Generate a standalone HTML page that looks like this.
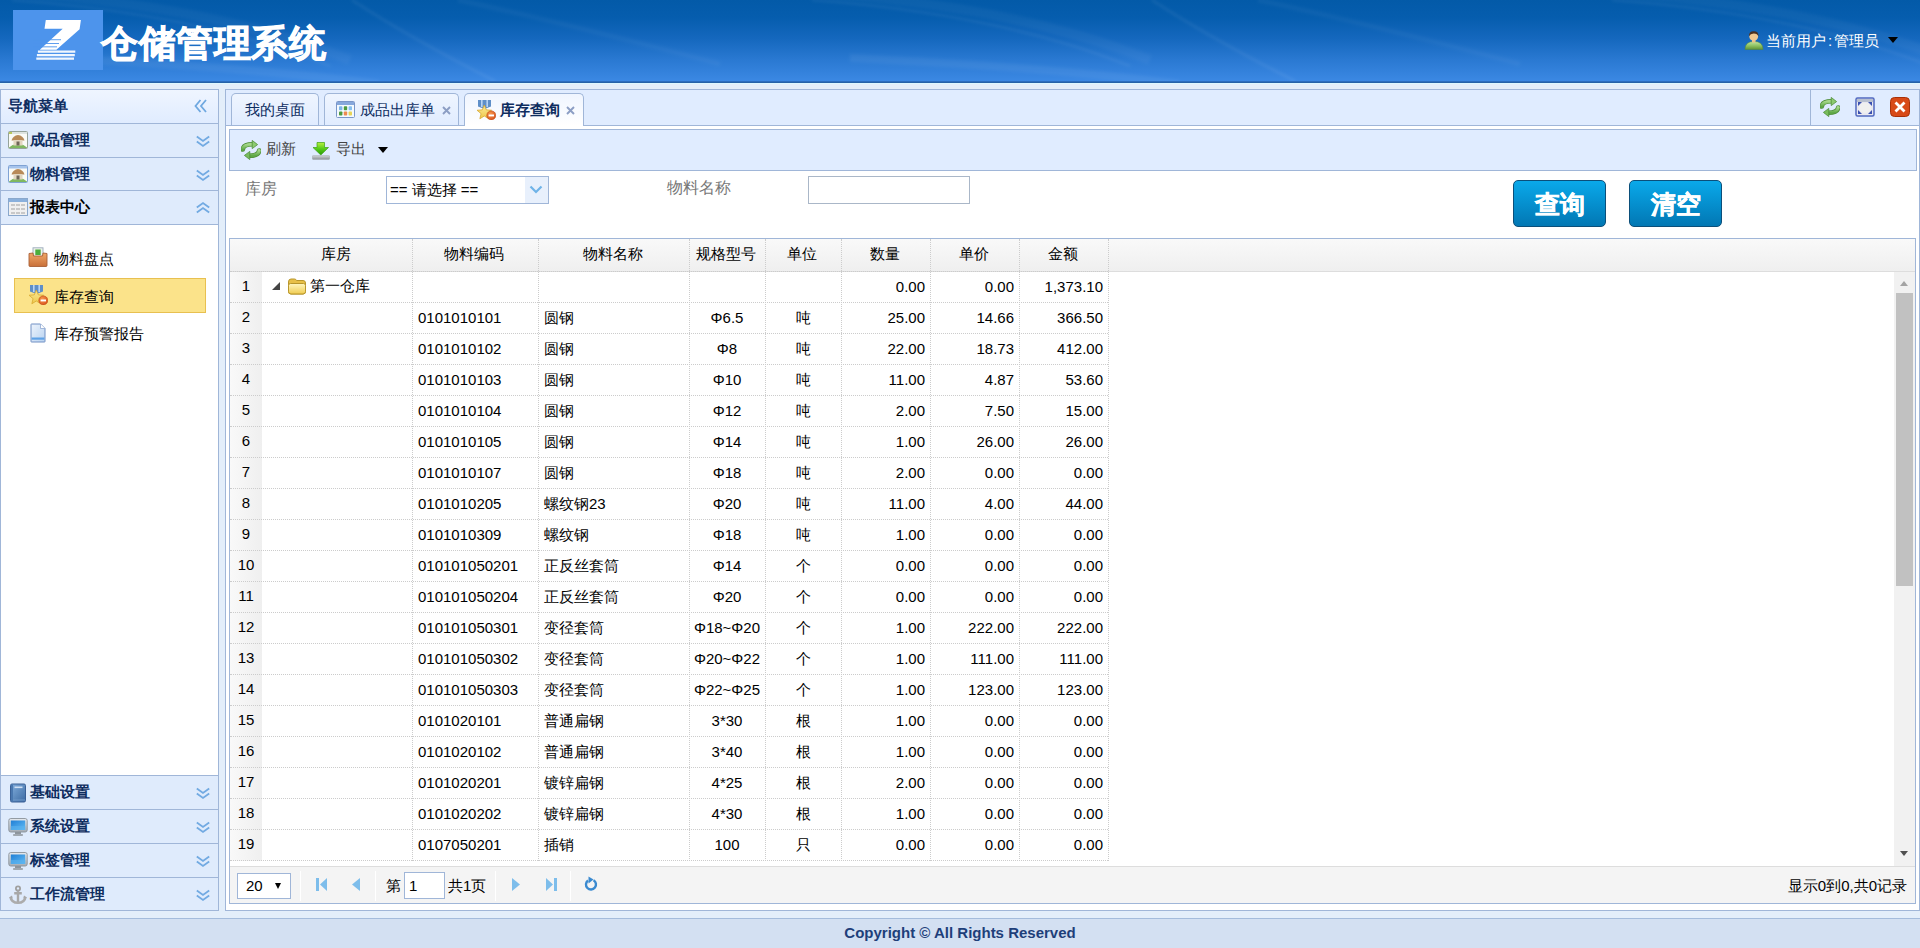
<!DOCTYPE html>
<html><head><meta charset="utf-8"><title>仓储管理系统</title>
<style>
*{box-sizing:border-box}
html,body{margin:0;padding:0}
body{width:1920px;height:948px;overflow:hidden;position:relative;background:#E3EEFA;font-family:"Liberation Sans",sans-serif;font-size:15px;color:#000}
.abs{position:absolute}
svg{display:block}
#hdr{left:0;top:0;width:1920px;height:81px;background:linear-gradient(to bottom,#035AA8 0,#065DAE 22%,#1568BE 48%,#2A79D2 74%,#3B88E3 100%)}
.swoosh{position:absolute;border-radius:50%}
.pnl{border:1px solid #A0B6D8}
.phd{background:linear-gradient(to bottom,#EFF5FF 0,#E0ECFF 100%);border-bottom:1px solid #A0B6D8}
.ptitle{font-weight:bold;color:#0E2D5F;white-space:nowrap}
.txt{white-space:nowrap;line-height:17px}
.dotv{position:absolute;width:0;border-left:1px dotted #ccc}
.doth{position:absolute;height:0;border-top:1px dotted #ccc}
</style></head><body>

<div id="hdr" class="abs"></div>
<svg class="abs" style="left:0;top:0" width="1920" height="81" viewBox="0 0 1920 81"><defs><filter id="bl" x="-5%" y="-50%" width="110%" height="200%"><feGaussianBlur stdDeviation="1.8"/></filter></defs><g filter="url(#bl)"><path d="M-448 0 Q-390 38 -305 81" fill="none" stroke="rgba(255,255,255,0.07)" stroke-width="2.5"/><path d="M-750 58 Q-540 68 -421 84" fill="none" stroke="rgba(255,255,255,0.05)" stroke-width="8"/><path d="M-342 0 Q-240 22 -80 64" fill="none" stroke="rgba(255,255,255,0.035)" stroke-width="5"/><path d="M12 0 Q200 14 330 66" fill="none" stroke="rgba(255,255,255,0.07)" stroke-width="2"/><path d="M30 -6 Q220 8 350 60" fill="none" stroke="rgba(255,255,255,0.035)" stroke-width="10"/><path d="M352 0 Q410 38 495 81" fill="none" stroke="rgba(255,255,255,0.07)" stroke-width="2.5"/><path d="M50 58 Q260 68 379 84" fill="none" stroke="rgba(255,255,255,0.05)" stroke-width="8"/><path d="M458 0 Q560 22 720 64" fill="none" stroke="rgba(255,255,255,0.035)" stroke-width="5"/><path d="M812 0 Q1000 14 1130 66" fill="none" stroke="rgba(255,255,255,0.07)" stroke-width="2"/><path d="M830 -6 Q1020 8 1150 60" fill="none" stroke="rgba(255,255,255,0.035)" stroke-width="10"/><path d="M1152 0 Q1210 38 1295 81" fill="none" stroke="rgba(255,255,255,0.07)" stroke-width="2.5"/><path d="M850 58 Q1060 68 1179 84" fill="none" stroke="rgba(255,255,255,0.05)" stroke-width="8"/><path d="M1258 0 Q1360 22 1520 64" fill="none" stroke="rgba(255,255,255,0.035)" stroke-width="5"/><path d="M1612 0 Q1800 14 1930 66" fill="none" stroke="rgba(255,255,255,0.07)" stroke-width="2"/><path d="M1630 -6 Q1820 8 1950 60" fill="none" stroke="rgba(255,255,255,0.035)" stroke-width="10"/></g></svg>
<div class="abs" style="left:0;top:81px;width:1920px;height:1px;background:#2C6EBE"></div>
<div class="abs" style="left:0;top:82px;width:1920px;height:1px;background:#2662A8"></div>
<div class="abs" style="left:0;top:83px;width:1920px;height:1px;background:#DDF8FF"></div>
<div class="abs" style="left:13px;top:10px;width:90px;height:60px;background:#4D94EC"></div>
<svg class="abs" style="left:13px;top:10px" width="90" height="60" viewBox="0 0 90 60">
<path d="M32.8 10 L67.9 10 L66.6 19.2 L43.4 39.8 L26.8 39.8 L49.7 18.7 L31.5 18.7 Z" fill="#fff"/>
<g fill="#4D94EC"><rect x="20" y="29.3" width="28" height="0.9"/><rect x="20" y="33" width="26" height="0.9"/><rect x="20" y="36.4" width="24" height="0.9"/></g>
<path d="M24.9 40.6 L62.3 40.6 L62.3 42.7 L24.9 42.7 Z M23.9 44.1 L61.8 44.1 L61.8 46.2 L23.9 46.2 Z M23.3 47.6 L61 47.6 L61 49.8 L23.3 49.8 Z" fill="#fff" opacity="0.92"/>
</svg>
<div class="abs txt" style="left:101px;top:21px;letter-spacing:0.6px;font-size:37.4px;line-height:44px;font-weight:bold;color:#fff;-webkit-text-stroke:0.9px #fff">仓储管理系统</div>
<div class="abs" style="left:1744px;top:30px"><svg width="20" height="20" viewBox="0 0 20 20"><defs><linearGradient id="ug" x1="0" y1="0" x2="0" y2="1"><stop offset="0" stop-color="#C4E8A0"/><stop offset="0.55" stop-color="#8CC060"/><stop offset="1" stop-color="#5E9236"/></linearGradient></defs><path d="M1 19.5 Q1 11.5 10 11.5 Q19 11.5 19 19.5 Z" fill="url(#ug)" stroke="#5A8A34" stroke-width="0.5"/><rect x="8" y="9.5" width="3.5" height="3" fill="#E8C088"/><circle cx="9.7" cy="6.4" r="4.4" fill="#F0C890"/><path d="M5 6.2 Q4.8 1.2 9.8 1.2 Q14.8 1.2 14.5 6.4 Q13.5 3.8 9.8 3.6 Q6.2 3.8 5 6.2 Z" fill="#4A3020"/></svg></div>
<div class="abs txt" style="left:1766px;top:32px;color:#fff">当前用户<span style="padding:0 2px 0 2px">:</span>管理员</div>
<div class="abs" style="left:1888px;top:37px;width:0;height:0;border-left:5px solid transparent;border-right:5px solid transparent;border-top:6px solid #000"></div>
<div class="abs pnl" style="left:0;top:89px;width:219px;height:822px;background:#fff"></div>
<div class="abs phd" style="left:1px;top:90px;width:217px;height:34px"></div>
<div class="abs txt ptitle" style="left:8px;top:97px">导航菜单</div>
<div class="abs" style="left:194px;top:99px"><svg width="14" height="14" viewBox="0 0 14 14"><path d="M6.5 1 L1.5 7 L6.5 13" fill="none" stroke="#6fa8e0" stroke-width="1.8"/><path d="M12 1 L7 7 L12 13" fill="none" stroke="#6fa8e0" stroke-width="1.8"/></svg></div>
<div class="abs phd" style="left:1px;top:124px;width:217px;height:34px;background:#DFEBFC;"></div><div class="abs" style="left:8px;top:131px"><svg width="20" height="18" viewBox="0 0 20 18"><rect x="0.5" y="0.5" width="19" height="17" rx="1" fill="#FAFBF6" stroke="#95A39A"/><rect x="1" y="1" width="18" height="2" fill="#DDE3E0"/><rect x="1" y="1" width="3" height="2" fill="#B8C860"/><path d="M1 16.5 Q6 12 10 13.5 Q14 12 19 16.5 L19 17 L1 17 Z" fill="#7FB860"/><path d="M3.5 9.5 Q5 4.5 10 4 Q15 4.5 16.5 9.5 Z" fill="#B88A58"/><rect x="5.5" y="9" width="9" height="5.5" fill="#E2D6C0"/><rect x="8.5" y="10.5" width="3" height="4" fill="#6F6658"/></svg></div><div class="abs txt ptitle" style="left:30px;top:131px;color:#0E2D5F">成品管理</div><div class="abs" style="left:196px;top:134px"><svg width="14" height="14" viewBox="0 0 14 14"><path d="M0.8 2.5 L7 7 L13.2 2.5" fill="none" stroke="#72AAE2" stroke-width="1.8"/><path d="M0.8 7.5 L7 12 L13.2 7.5" fill="none" stroke="#72AAE2" stroke-width="1.8"/></svg></div>
<div class="abs phd" style="left:1px;top:158px;width:217px;height:33px;background:#DFEBFC;"></div><div class="abs" style="left:8px;top:165px"><svg width="20" height="18" viewBox="0 0 20 18"><rect x="0.5" y="0.5" width="19" height="17" rx="1" fill="#FAFBF6" stroke="#7FA2D4"/><rect x="1" y="1" width="18" height="2.5" fill="#A6C4EC"/><path d="M1 16.5 Q6 12 10 13.5 Q14 12 19 16.5 L19 17 L1 17 Z" fill="#7FB860"/><path d="M3.5 9.5 Q5 4.5 10 4 Q15 4.5 16.5 9.5 Z" fill="#B88A58"/><rect x="5.5" y="9" width="9" height="5.5" fill="#E2D6C0"/><rect x="8.5" y="10.5" width="3" height="4" fill="#6F6658"/></svg></div><div class="abs txt ptitle" style="left:30px;top:165px;color:#0E2D5F">物料管理</div><div class="abs" style="left:196px;top:168px"><svg width="14" height="14" viewBox="0 0 14 14"><path d="M0.8 2.5 L7 7 L13.2 2.5" fill="none" stroke="#72AAE2" stroke-width="1.8"/><path d="M0.8 7.5 L7 12 L13.2 7.5" fill="none" stroke="#72AAE2" stroke-width="1.8"/></svg></div>
<div class="abs phd" style="left:1px;top:191px;width:217px;height:34px;background:#DFEBFC;"></div><div class="abs" style="left:8px;top:198px"><svg width="20" height="18" viewBox="0 0 20 18"><rect x="0.5" y="0.5" width="19" height="17" fill="#f0f0f0" stroke="#8aa8cc"/><rect x="1" y="1" width="18" height="3" fill="#8ab0dc"/><g fill="#c8c8c8"><rect x="3" y="6" width="4" height="2"/><rect x="8" y="6" width="4" height="2"/><rect x="13" y="6" width="4" height="2"/><rect x="3" y="10" width="4" height="2"/><rect x="8" y="10" width="4" height="2"/><rect x="13" y="10" width="4" height="2"/><rect x="3" y="14" width="4" height="2"/><rect x="8" y="14" width="4" height="2"/><rect x="13" y="14" width="4" height="2"/></g></svg></div><div class="abs txt ptitle" style="left:30px;top:198px;color:#000">报表中心</div><div class="abs" style="left:196px;top:201px"><svg width="14" height="14" viewBox="0 0 14 14"><path d="M0.8 6.5 L7 2 L13.2 6.5" fill="none" stroke="#72AAE2" stroke-width="1.8"/><path d="M0.8 11.5 L7 7 L13.2 11.5" fill="none" stroke="#72AAE2" stroke-width="1.8"/></svg></div>
<div class="abs" style="left:14px;top:278px;width:192px;height:35px;background:#FBE38A;border:1px solid #E8C050"></div>
<div class="abs" style="left:28px;top:247px"><svg width="20" height="20" viewBox="0 0 20 20"><defs><linearGradient id="bxg" x1="0" y1="0" x2="0" y2="1"><stop offset="0" stop-color="#F2A868"/><stop offset="1" stop-color="#C8703A"/></linearGradient></defs><rect x="5" y="0.8" width="10" height="9" fill="#EEF2EA" stroke="#9AAABA" stroke-width="0.9"/><rect x="7.3" y="2.5" width="5.4" height="5.5" fill="#4CAE3C"/><path d="M1 6.5 L5 6 L5.5 9 L14.5 9 L15 6 L19 6.5 L19 18.5 Q19 19.5 18 19.5 L2 19.5 Q1 19.5 1 18.5 Z" fill="url(#bxg)" stroke="#A86038" stroke-width="0.9"/></svg></div>
<div class="abs txt" style="left:54px;top:250px">物料盘点</div>
<div class="abs" style="left:28px;top:285px"><svg width="20" height="20" viewBox="0 0 20 20"><defs><linearGradient id="mg" x1="0" y1="0" x2="0" y2="1"><stop offset="0" stop-color="#FBEA9A"/><stop offset="1" stop-color="#EFC84A"/></linearGradient><radialGradient id="bg2" cx="0.4" cy="0.35" r="0.7"><stop offset="0" stop-color="#F89A50"/><stop offset="1" stop-color="#D8501A"/></radialGradient></defs><path d="M2 0 L15 0 L15 6.5 L8.5 9 L2 6.5 Z" fill="#5F8FC8"/><rect x="5" y="0" width="1.6" height="7" fill="#B8D4F4"/><rect x="10.4" y="0" width="1.6" height="7" fill="#B8D4F4"/><path d="M8.30 5.00 L10.30 9.85 L15.53 10.25 L11.53 13.65 L12.77 18.75 L8.30 16.00 L3.83 18.75 L5.07 13.65 L1.07 10.25 L6.30 9.85 Z" fill="url(#mg)" stroke="#D8A830" stroke-width="0.8" stroke-linejoin="round"/><circle cx="15.3" cy="15.4" r="4.5" fill="url(#bg2)" stroke="#C04810" stroke-width="0.6"/><rect x="12.6" y="14.5" width="5.4" height="1.9" fill="#fff"/></svg></div>
<div class="abs txt" style="left:54px;top:288px">库存查询</div>
<div class="abs" style="left:28px;top:323px"><svg width="20" height="20" viewBox="0 0 20 20"><defs><linearGradient id="pgg" x1="0" y1="0" x2="1" y2="1"><stop offset="0" stop-color="#EEF4FC"/><stop offset="1" stop-color="#B8D2F0"/></linearGradient></defs><path d="M3 1.5 Q3 1 3.5 1 L12.5 1 L17 5.5 L17 18.5 Q17 19 16.5 19 L3.5 19 Q3 19 3 18.5 Z" fill="url(#pgg)" stroke="#7090C4" stroke-width="1"/><path d="M12.5 1 L12.5 5.5 L17 5.5" fill="#FFFFFF" stroke="#90A8D0" stroke-width="0.8"/><rect x="3.6" y="14.5" width="12.8" height="2.2" fill="#5FA2E6"/></svg></div>
<div class="abs txt" style="left:54px;top:325px">库存预警报告</div>
<div class="abs" style="left:1px;top:775px;width:217px;height:1px;background:#A0B6D8"></div>
<div class="abs phd" style="left:1px;top:776px;width:217px;height:34px;background:#DFEBFC;"></div><div class="abs" style="left:8px;top:783px"><svg width="20" height="20" viewBox="0 0 20 20"><defs><linearGradient id="bkg" x1="0" y1="0" x2="1" y2="1"><stop offset="0" stop-color="#82AEDD"/><stop offset="1" stop-color="#3C6AA2"/></linearGradient></defs><rect x="2.5" y="1" width="15" height="18" rx="1.5" fill="url(#bkg)" stroke="#3A6096"/><rect x="3" y="1.5" width="2" height="17" fill="#4A78B0"/><rect x="6.5" y="3.5" width="8" height="1.6" fill="#CFE0F4"/><rect x="5" y="16.5" width="12" height="1" fill="#6E98C8"/></svg></div><div class="abs txt ptitle" style="left:30px;top:783px;color:#0E2D5F">基础设置</div><div class="abs" style="left:196px;top:786px"><svg width="14" height="14" viewBox="0 0 14 14"><path d="M0.8 2.5 L7 7 L13.2 2.5" fill="none" stroke="#72AAE2" stroke-width="1.8"/><path d="M0.8 7.5 L7 12 L13.2 7.5" fill="none" stroke="#72AAE2" stroke-width="1.8"/></svg></div>
<div class="abs phd" style="left:1px;top:810px;width:217px;height:34px;background:#DFEBFC;"></div><div class="abs" style="left:8px;top:817px"><svg width="20" height="20" viewBox="0 0 20 20"><defs><linearGradient id="mfg" x1="0" y1="0" x2="0" y2="1"><stop offset="0" stop-color="#E6EAEE"/><stop offset="1" stop-color="#A4ACB4"/></linearGradient><linearGradient id="msg" x1="0" y1="0" x2="1" y2="1"><stop offset="0" stop-color="#1F7FD6"/><stop offset="1" stop-color="#64BCF4"/></linearGradient></defs><rect x="7" y="14" width="6" height="4.5" fill="#8E969E"/><rect x="5" y="17" width="10" height="2" rx="0.8" fill="#A0A8B0"/><rect x="0.8" y="1.5" width="18.4" height="13.5" rx="2" fill="url(#mfg)" stroke="#8A929A" stroke-width="0.9"/><rect x="2.8" y="3.5" width="14.4" height="9.5" fill="url(#msg)"/><rect x="2.8" y="9" width="14.4" height="4" fill="#5AB2EE" opacity="0.6"/></svg></div><div class="abs txt ptitle" style="left:30px;top:817px;color:#0E2D5F">系统设置</div><div class="abs" style="left:196px;top:820px"><svg width="14" height="14" viewBox="0 0 14 14"><path d="M0.8 2.5 L7 7 L13.2 2.5" fill="none" stroke="#72AAE2" stroke-width="1.8"/><path d="M0.8 7.5 L7 12 L13.2 7.5" fill="none" stroke="#72AAE2" stroke-width="1.8"/></svg></div>
<div class="abs phd" style="left:1px;top:844px;width:217px;height:34px;background:#DFEBFC;"></div><div class="abs" style="left:8px;top:851px"><svg width="20" height="20" viewBox="0 0 20 20"><defs><linearGradient id="mfg" x1="0" y1="0" x2="0" y2="1"><stop offset="0" stop-color="#E6EAEE"/><stop offset="1" stop-color="#A4ACB4"/></linearGradient><linearGradient id="msg" x1="0" y1="0" x2="1" y2="1"><stop offset="0" stop-color="#1F7FD6"/><stop offset="1" stop-color="#64BCF4"/></linearGradient></defs><rect x="7" y="14" width="6" height="4.5" fill="#8E969E"/><rect x="5" y="17" width="10" height="2" rx="0.8" fill="#A0A8B0"/><rect x="0.8" y="1.5" width="18.4" height="13.5" rx="2" fill="url(#mfg)" stroke="#8A929A" stroke-width="0.9"/><rect x="2.8" y="3.5" width="14.4" height="9.5" fill="url(#msg)"/><rect x="2.8" y="9" width="14.4" height="4" fill="#5AB2EE" opacity="0.6"/></svg></div><div class="abs txt ptitle" style="left:30px;top:851px;color:#0E2D5F">标签管理</div><div class="abs" style="left:196px;top:854px"><svg width="14" height="14" viewBox="0 0 14 14"><path d="M0.8 2.5 L7 7 L13.2 2.5" fill="none" stroke="#72AAE2" stroke-width="1.8"/><path d="M0.8 7.5 L7 12 L13.2 7.5" fill="none" stroke="#72AAE2" stroke-width="1.8"/></svg></div>
<div class="abs phd" style="left:1px;top:878px;width:217px;height:32px;background:#DFEBFC;border-bottom:none"></div><div class="abs" style="left:8px;top:885px"><svg width="20" height="20" viewBox="0 0 20 20"><circle cx="10" cy="3.4" r="2.1" fill="none" stroke="#A0A0A0" stroke-width="1.8"/><path d="M10 5.5 V17.5 M6.2 8.2 H13.8" fill="none" stroke="#A8A8A8" stroke-width="2.4"/><path d="M2.5 12 Q3.5 17.8 10 17.8 Q16.5 17.8 17.5 12" fill="none" stroke="#ACACAC" stroke-width="2.6"/><path d="M1 12.5 L4 10.5 L4.8 13.5 Z M19 12.5 L16 10.5 L15.2 13.5 Z" fill="#A8A8A8"/></svg></div><div class="abs txt ptitle" style="left:30px;top:885px;color:#0E2D5F">工作流管理</div><div class="abs" style="left:196px;top:888px"><svg width="14" height="14" viewBox="0 0 14 14"><path d="M0.8 2.5 L7 7 L13.2 2.5" fill="none" stroke="#72AAE2" stroke-width="1.8"/><path d="M0.8 7.5 L7 12 L13.2 7.5" fill="none" stroke="#72AAE2" stroke-width="1.8"/></svg></div>
<div class="abs pnl" style="left:225px;top:89px;width:1695px;height:822px;background:#fff"></div>
<div class="abs" style="left:226px;top:90px;width:1693px;height:36px;background:#E0ECFF;border-bottom:1px solid #A0B6D8"></div>
<div class="abs" style="left:231px;top:93px;width:88px;height:32px;background:linear-gradient(to bottom,#EFF5FF 0,#E0ECFF 100%);border:1px solid #A0B6D8;border-bottom:none;border-radius:5px 5px 0 0"><div class="abs txt" style="left:13px;top:7px;color:#0E2D5F">我的桌面</div></div>
<div class="abs" style="left:324px;top:93px;width:135px;height:32px;background:linear-gradient(to bottom,#EFF5FF 0,#E0ECFF 100%);border:1px solid #A0B6D8;border-bottom:none;border-radius:5px 5px 0 0"><div class="abs" style="left:11px;top:7px"><svg width="19" height="17" viewBox="0 0 19 17"><rect x="0.5" y="0.5" width="18" height="16" rx="1" fill="#F4FAFE" stroke="#7A96C8"/><rect x="1" y="1" width="17" height="3" fill="#86A8DC"/><rect x="3" y="5.3" width="3.4" height="4" rx="0.8" fill="#7EB6E8"/><rect x="7.8" y="5.3" width="3.4" height="4" rx="0.8" fill="#4C9A40"/><rect x="12.6" y="5.3" width="3.4" height="4" rx="0.8" fill="#86C0F0"/><rect x="3" y="10.5" width="3.4" height="4" rx="0.8" fill="#4C9A40"/><rect x="7.8" y="10.5" width="3.4" height="4" rx="0.8" fill="#EE8A50"/><rect x="12.6" y="10.5" width="3.4" height="4" rx="0.8" fill="#E8D458"/></svg></div><div class="abs txt" style="left:35px;top:7px;color:#0E2D5F">成品出库单</div><svg class="abs" style="left:117px;top:12px" width="9" height="9" viewBox="0 0 9 9"><path d="M1 1 L8 8 M8 1 L1 8" stroke="#8C9EC4" stroke-width="1.9"/></svg></div>
<div class="abs" style="left:464px;top:93px;width:120px;height:33px;background:linear-gradient(to bottom,#EFF5FF 0,#ffffff 100%);border:1px solid #A0B6D8;border-bottom:none;border-radius:5px 5px 0 0"><div class="abs" style="left:11px;top:6px"><svg width="20" height="20" viewBox="0 0 20 20"><defs><linearGradient id="mg" x1="0" y1="0" x2="0" y2="1"><stop offset="0" stop-color="#FBEA9A"/><stop offset="1" stop-color="#EFC84A"/></linearGradient><radialGradient id="bg2" cx="0.4" cy="0.35" r="0.7"><stop offset="0" stop-color="#F89A50"/><stop offset="1" stop-color="#D8501A"/></radialGradient></defs><path d="M2 0 L15 0 L15 6.5 L8.5 9 L2 6.5 Z" fill="#5F8FC8"/><rect x="5" y="0" width="1.6" height="7" fill="#B8D4F4"/><rect x="10.4" y="0" width="1.6" height="7" fill="#B8D4F4"/><path d="M8.30 5.00 L10.30 9.85 L15.53 10.25 L11.53 13.65 L12.77 18.75 L8.30 16.00 L3.83 18.75 L5.07 13.65 L1.07 10.25 L6.30 9.85 Z" fill="url(#mg)" stroke="#D8A830" stroke-width="0.8" stroke-linejoin="round"/><circle cx="15.3" cy="15.4" r="4.5" fill="url(#bg2)" stroke="#C04810" stroke-width="0.6"/><rect x="12.6" y="14.5" width="5.4" height="1.9" fill="#fff"/></svg></div><div class="abs txt" style="left:35px;top:7px;color:#0E2D5F;font-weight:bold">库存查询</div><svg class="abs" style="left:101px;top:12px" width="9" height="9" viewBox="0 0 9 9"><path d="M1 1 L8 8 M8 1 L1 8" stroke="#8C9EC4" stroke-width="1.9"/></svg></div>
<div class="abs" style="left:1810px;top:90px;width:1px;height:35px;background:#A0B6D8"></div>
<div class="abs" style="left:1820px;top:97px"><svg width="20" height="20" viewBox="0 0 20 20"><defs><linearGradient id="rg" x1="0" y1="0" x2="0" y2="1"><stop offset="0" stop-color="#A6D88A"/><stop offset="1" stop-color="#5EA846"/></linearGradient></defs><path d="M1.8 9.5 Q2.2 4.3 11.5 4.3" fill="none" stroke="#4F8F3A" stroke-width="4.6" stroke-linecap="round"/><path d="M1.8 9.5 Q2.2 4.3 11.5 4.3" fill="none" stroke="url(#rg)" stroke-width="3.2" stroke-linecap="round"/><path d="M11.2 0.4 L16.6 4.6 L11.2 8.6 Z" fill="#8CCB70" stroke="#4F8F3A" stroke-width="0.8" stroke-linejoin="round"/><path d="M18.2 10.5 Q17.8 15.7 8.5 15.7" fill="none" stroke="#4F8F3A" stroke-width="4.6" stroke-linecap="round"/><path d="M18.2 10.5 Q17.8 15.7 8.5 15.7" fill="none" stroke="url(#rg)" stroke-width="3.2" stroke-linecap="round"/><path d="M8.8 11.4 L3.4 15.4 L8.8 19.6 Z" fill="#78BC5C" stroke="#4F8F3A" stroke-width="0.8" stroke-linejoin="round"/></svg></div>
<div class="abs" style="left:1855px;top:97px"><svg width="20" height="20" viewBox="0 0 20 20"><rect x="1" y="1" width="18" height="18" rx="1.5" fill="#e8e8f0" stroke="#5068c0" stroke-width="1.5"/><rect x="2" y="2" width="16" height="3" fill="#b8c0d0"/><ellipse cx="10" cy="11" rx="6" ry="5" fill="#f0f0f0"/><path d="M3 5 L7 5 L3 9 Z M17 5 L13 5 L17 9 Z M3 17 L7 17 L3 13 Z M17 17 L13 17 L17 13 Z" fill="#3a50b0"/></svg></div>
<div class="abs" style="left:1890px;top:97px"><svg width="20" height="20" viewBox="0 0 20 20"><rect x="0.5" y="0.5" width="19" height="19" rx="4" fill="#d84a18" stroke="#a83008"/><path d="M5.5 5.5 L14.5 14.5 M14.5 5.5 L5.5 14.5" stroke="#fff" stroke-width="2.8"/></svg></div>
<div class="abs" style="left:229px;top:129px;width:1688px;height:42px;background:#E0ECFF;border:1px solid #A0B6D8"></div>
<div class="abs" style="left:241px;top:140px"><svg width="20" height="20" viewBox="0 0 20 20"><defs><linearGradient id="rg" x1="0" y1="0" x2="0" y2="1"><stop offset="0" stop-color="#A6D88A"/><stop offset="1" stop-color="#5EA846"/></linearGradient></defs><path d="M1.8 9.5 Q2.2 4.3 11.5 4.3" fill="none" stroke="#4F8F3A" stroke-width="4.6" stroke-linecap="round"/><path d="M1.8 9.5 Q2.2 4.3 11.5 4.3" fill="none" stroke="url(#rg)" stroke-width="3.2" stroke-linecap="round"/><path d="M11.2 0.4 L16.6 4.6 L11.2 8.6 Z" fill="#8CCB70" stroke="#4F8F3A" stroke-width="0.8" stroke-linejoin="round"/><path d="M18.2 10.5 Q17.8 15.7 8.5 15.7" fill="none" stroke="#4F8F3A" stroke-width="4.6" stroke-linecap="round"/><path d="M18.2 10.5 Q17.8 15.7 8.5 15.7" fill="none" stroke="url(#rg)" stroke-width="3.2" stroke-linecap="round"/><path d="M8.8 11.4 L3.4 15.4 L8.8 19.6 Z" fill="#78BC5C" stroke="#4F8F3A" stroke-width="0.8" stroke-linejoin="round"/></svg></div>
<div class="abs txt" style="left:266px;top:140px;color:#444">刷新</div>
<div class="abs" style="left:312px;top:142px"><svg width="18" height="18" viewBox="0 0 18 18"><defs><linearGradient id="dg" x1="0" y1="0" x2="0" y2="1"><stop offset="0" stop-color="#B8F040"/><stop offset="0.5" stop-color="#58CC18"/><stop offset="1" stop-color="#2A9A08"/></linearGradient><linearGradient id="tg" x1="0" y1="0" x2="0" y2="1"><stop offset="0" stop-color="#D0D4D8"/><stop offset="1" stop-color="#8C9298"/></linearGradient></defs><path d="M5 0.5 L12.5 0.5 L12.5 5.5 L16.5 5.5 L8.8 13 L1 5.5 L5 5.5 Z" fill="url(#dg)" stroke="#3AA012" stroke-width="0.7" stroke-linejoin="round"/><rect x="0.3" y="13.5" width="17.4" height="4" rx="1" fill="url(#tg)" stroke="#9AA0A6" stroke-width="0.4"/></svg></div>
<div class="abs txt" style="left:336px;top:140px;color:#444">导出</div>
<div class="abs" style="left:378px;top:147px;width:0;height:0;border-left:5.5px solid transparent;border-right:5.5px solid transparent;border-top:6px solid #000"></div>
<div class="abs txt" style="left:245px;top:180px;color:#777;font-size:16px">库房</div>
<div class="abs" style="left:386px;top:176px;width:163px;height:28px;border:1px solid #A0B6D8;background:#fff"></div>
<div class="abs" style="left:525px;top:177px;width:23px;height:26px;background:#E8F0FC"></div>
<svg class="abs" style="left:529px;top:185px" width="14" height="9" viewBox="0 0 14 9"><path d="M1.5 1.5 L7 7 L12.5 1.5" fill="none" stroke="#6FB3E8" stroke-width="2.2"/></svg>
<div class="abs txt" style="left:390px;top:181px">== 请选择 ==</div>
<div class="abs txt" style="left:667px;top:179px;color:#777;font-size:16px">物料名称</div>
<div class="abs" style="left:808px;top:176px;width:162px;height:28px;border:1px solid #AAB7C8;background:#fff"></div>
<div class="abs" style="left:1513px;top:180px;width:93px;height:47px;border:1px solid #0B4F7A;border-radius:5px;background:linear-gradient(to bottom,#0AA9EA 0,#0590CF 50%,#0277B3 100%)"><div class="abs txt" style="left:0;width:91px;top:10px;line-height:26px;text-align:center;color:#fff;font-weight:bold;font-size:25px;-webkit-text-stroke:0.5px #fff">查询</div></div>
<div class="abs" style="left:1629px;top:180px;width:93px;height:47px;border:1px solid #0B4F7A;border-radius:5px;background:linear-gradient(to bottom,#0AA9EA 0,#0590CF 50%,#0277B3 100%)"><div class="abs txt" style="left:0;width:91px;top:10px;line-height:26px;text-align:center;color:#fff;font-weight:bold;font-size:25px;-webkit-text-stroke:0.5px #fff">清空</div></div>
<div class="abs" style="left:229px;top:238px;width:1687px;height:666px;border:1px solid #A0B6D8;background:#fff"></div>
<div class="abs" style="left:230px;top:239px;width:1685px;height:33px;background:linear-gradient(to bottom,#F9F9F9 0,#EFEFEF 100%);border-bottom:1px solid #DDD"></div>
<div class="doth" style="left:230px;top:271px;width:878px;border-top-color:#ccc"></div>
<div class="abs" style="left:230px;top:272px;width:32px;height:589px;background:linear-gradient(to right,#F9F9F9 0,#EFEFEF 100%)"></div>
<div class="dotv" style="left:412px;top:239px;height:622px"></div>
<div class="dotv" style="left:538px;top:239px;height:622px"></div>
<div class="dotv" style="left:689px;top:239px;height:622px"></div>
<div class="dotv" style="left:765px;top:239px;height:622px"></div>
<div class="dotv" style="left:841px;top:239px;height:622px"></div>
<div class="dotv" style="left:930px;top:239px;height:622px"></div>
<div class="dotv" style="left:1019px;top:239px;height:622px"></div>
<div class="dotv" style="left:1108px;top:239px;height:622px"></div>
<div class="abs txt" style="left:261px;width:150px;top:245px;text-align:center">库房</div>
<div class="abs txt" style="left:411px;width:126px;top:245px;text-align:center">物料编码</div>
<div class="abs txt" style="left:537px;width:151px;top:245px;text-align:center">物料名称</div>
<div class="abs txt" style="left:688px;width:76px;top:245px;text-align:center">规格型号</div>
<div class="abs txt" style="left:764px;width:76px;top:245px;text-align:center">单位</div>
<div class="abs txt" style="left:840px;width:89px;top:245px;text-align:center">数量</div>
<div class="abs txt" style="left:929px;width:89px;top:245px;text-align:center">单价</div>
<div class="abs txt" style="left:1018px;width:89px;top:245px;text-align:center">金额</div>
<div class="doth" style="left:230px;top:302px;width:878px"></div>
<div class="abs txt" style="left:230px;width:32px;top:277px;text-align:center">1</div>
<div class="abs" style="left:272px;top:282px;width:0;height:0;border-left:8px solid transparent;border-bottom:8px solid #444"></div>
<div class="abs" style="left:287px;top:278px"><svg width="20" height="17" viewBox="0 0 20 17"><defs><linearGradient id="fg" x1="0" y1="0" x2="0" y2="1"><stop offset="0" stop-color="#FFF6C0"/><stop offset="1" stop-color="#F0CC50"/></linearGradient></defs><path d="M1.5 4 Q1.5 1 4 1 L7.5 1 Q9 1 9.5 2.5 L16 2.5 Q18.5 2.5 18.5 5 L18.5 13.5 Q18.5 16 16 16 L4 16 Q1.5 16 1.5 13.5 Z" fill="#E8C048" stroke="#B8962C" stroke-width="1"/><path d="M1.5 7.5 Q1.5 5.5 3.5 5.5 L16.5 5.5 Q18.5 5.5 18.5 7.5 L18.5 13.5 Q18.5 16 16 16 L4 16 Q1.5 16 1.5 13.5 Z" fill="url(#fg)" stroke="#B8962C" stroke-width="1"/></svg></div>
<div class="abs txt" style="left:310px;top:277px">第一仓库</div>
<div class="abs txt" style="left:841px;width:84px;top:278px;text-align:right">0.00</div>
<div class="abs txt" style="left:930px;width:84px;top:278px;text-align:right">0.00</div>
<div class="abs txt" style="left:1019px;width:84px;top:278px;text-align:right">1,373.10</div>
<div class="doth" style="left:230px;top:333px;width:878px"></div>
<div class="abs txt" style="left:230px;width:32px;top:308px;text-align:center">2</div>
<div class="abs txt" style="left:418px;top:309px">0101010101</div>
<div class="abs txt" style="left:544px;top:309px">圆钢</div>
<div class="abs txt" style="left:689px;width:76px;top:309px;text-align:center">Φ6.5</div>
<div class="abs txt" style="left:765px;width:76px;top:309px;text-align:center">吨</div>
<div class="abs txt" style="left:841px;width:84px;top:309px;text-align:right">25.00</div>
<div class="abs txt" style="left:930px;width:84px;top:309px;text-align:right">14.66</div>
<div class="abs txt" style="left:1019px;width:84px;top:309px;text-align:right">366.50</div>
<div class="doth" style="left:230px;top:364px;width:878px"></div>
<div class="abs txt" style="left:230px;width:32px;top:339px;text-align:center">3</div>
<div class="abs txt" style="left:418px;top:340px">0101010102</div>
<div class="abs txt" style="left:544px;top:340px">圆钢</div>
<div class="abs txt" style="left:689px;width:76px;top:340px;text-align:center">Φ8</div>
<div class="abs txt" style="left:765px;width:76px;top:340px;text-align:center">吨</div>
<div class="abs txt" style="left:841px;width:84px;top:340px;text-align:right">22.00</div>
<div class="abs txt" style="left:930px;width:84px;top:340px;text-align:right">18.73</div>
<div class="abs txt" style="left:1019px;width:84px;top:340px;text-align:right">412.00</div>
<div class="doth" style="left:230px;top:395px;width:878px"></div>
<div class="abs txt" style="left:230px;width:32px;top:370px;text-align:center">4</div>
<div class="abs txt" style="left:418px;top:371px">0101010103</div>
<div class="abs txt" style="left:544px;top:371px">圆钢</div>
<div class="abs txt" style="left:689px;width:76px;top:371px;text-align:center">Φ10</div>
<div class="abs txt" style="left:765px;width:76px;top:371px;text-align:center">吨</div>
<div class="abs txt" style="left:841px;width:84px;top:371px;text-align:right">11.00</div>
<div class="abs txt" style="left:930px;width:84px;top:371px;text-align:right">4.87</div>
<div class="abs txt" style="left:1019px;width:84px;top:371px;text-align:right">53.60</div>
<div class="doth" style="left:230px;top:426px;width:878px"></div>
<div class="abs txt" style="left:230px;width:32px;top:401px;text-align:center">5</div>
<div class="abs txt" style="left:418px;top:402px">0101010104</div>
<div class="abs txt" style="left:544px;top:402px">圆钢</div>
<div class="abs txt" style="left:689px;width:76px;top:402px;text-align:center">Φ12</div>
<div class="abs txt" style="left:765px;width:76px;top:402px;text-align:center">吨</div>
<div class="abs txt" style="left:841px;width:84px;top:402px;text-align:right">2.00</div>
<div class="abs txt" style="left:930px;width:84px;top:402px;text-align:right">7.50</div>
<div class="abs txt" style="left:1019px;width:84px;top:402px;text-align:right">15.00</div>
<div class="doth" style="left:230px;top:457px;width:878px"></div>
<div class="abs txt" style="left:230px;width:32px;top:432px;text-align:center">6</div>
<div class="abs txt" style="left:418px;top:433px">0101010105</div>
<div class="abs txt" style="left:544px;top:433px">圆钢</div>
<div class="abs txt" style="left:689px;width:76px;top:433px;text-align:center">Φ14</div>
<div class="abs txt" style="left:765px;width:76px;top:433px;text-align:center">吨</div>
<div class="abs txt" style="left:841px;width:84px;top:433px;text-align:right">1.00</div>
<div class="abs txt" style="left:930px;width:84px;top:433px;text-align:right">26.00</div>
<div class="abs txt" style="left:1019px;width:84px;top:433px;text-align:right">26.00</div>
<div class="doth" style="left:230px;top:488px;width:878px"></div>
<div class="abs txt" style="left:230px;width:32px;top:463px;text-align:center">7</div>
<div class="abs txt" style="left:418px;top:464px">0101010107</div>
<div class="abs txt" style="left:544px;top:464px">圆钢</div>
<div class="abs txt" style="left:689px;width:76px;top:464px;text-align:center">Φ18</div>
<div class="abs txt" style="left:765px;width:76px;top:464px;text-align:center">吨</div>
<div class="abs txt" style="left:841px;width:84px;top:464px;text-align:right">2.00</div>
<div class="abs txt" style="left:930px;width:84px;top:464px;text-align:right">0.00</div>
<div class="abs txt" style="left:1019px;width:84px;top:464px;text-align:right">0.00</div>
<div class="doth" style="left:230px;top:519px;width:878px"></div>
<div class="abs txt" style="left:230px;width:32px;top:494px;text-align:center">8</div>
<div class="abs txt" style="left:418px;top:495px">0101010205</div>
<div class="abs txt" style="left:544px;top:495px">螺纹钢23</div>
<div class="abs txt" style="left:689px;width:76px;top:495px;text-align:center">Φ20</div>
<div class="abs txt" style="left:765px;width:76px;top:495px;text-align:center">吨</div>
<div class="abs txt" style="left:841px;width:84px;top:495px;text-align:right">11.00</div>
<div class="abs txt" style="left:930px;width:84px;top:495px;text-align:right">4.00</div>
<div class="abs txt" style="left:1019px;width:84px;top:495px;text-align:right">44.00</div>
<div class="doth" style="left:230px;top:550px;width:878px"></div>
<div class="abs txt" style="left:230px;width:32px;top:525px;text-align:center">9</div>
<div class="abs txt" style="left:418px;top:526px">0101010309</div>
<div class="abs txt" style="left:544px;top:526px">螺纹钢</div>
<div class="abs txt" style="left:689px;width:76px;top:526px;text-align:center">Φ18</div>
<div class="abs txt" style="left:765px;width:76px;top:526px;text-align:center">吨</div>
<div class="abs txt" style="left:841px;width:84px;top:526px;text-align:right">1.00</div>
<div class="abs txt" style="left:930px;width:84px;top:526px;text-align:right">0.00</div>
<div class="abs txt" style="left:1019px;width:84px;top:526px;text-align:right">0.00</div>
<div class="doth" style="left:230px;top:581px;width:878px"></div>
<div class="abs txt" style="left:230px;width:32px;top:556px;text-align:center">10</div>
<div class="abs txt" style="left:418px;top:557px">010101050201</div>
<div class="abs txt" style="left:544px;top:557px">正反丝套筒</div>
<div class="abs txt" style="left:689px;width:76px;top:557px;text-align:center">Φ14</div>
<div class="abs txt" style="left:765px;width:76px;top:557px;text-align:center">个</div>
<div class="abs txt" style="left:841px;width:84px;top:557px;text-align:right">0.00</div>
<div class="abs txt" style="left:930px;width:84px;top:557px;text-align:right">0.00</div>
<div class="abs txt" style="left:1019px;width:84px;top:557px;text-align:right">0.00</div>
<div class="doth" style="left:230px;top:612px;width:878px"></div>
<div class="abs txt" style="left:230px;width:32px;top:587px;text-align:center">11</div>
<div class="abs txt" style="left:418px;top:588px">010101050204</div>
<div class="abs txt" style="left:544px;top:588px">正反丝套筒</div>
<div class="abs txt" style="left:689px;width:76px;top:588px;text-align:center">Φ20</div>
<div class="abs txt" style="left:765px;width:76px;top:588px;text-align:center">个</div>
<div class="abs txt" style="left:841px;width:84px;top:588px;text-align:right">0.00</div>
<div class="abs txt" style="left:930px;width:84px;top:588px;text-align:right">0.00</div>
<div class="abs txt" style="left:1019px;width:84px;top:588px;text-align:right">0.00</div>
<div class="doth" style="left:230px;top:643px;width:878px"></div>
<div class="abs txt" style="left:230px;width:32px;top:618px;text-align:center">12</div>
<div class="abs txt" style="left:418px;top:619px">010101050301</div>
<div class="abs txt" style="left:544px;top:619px">变径套筒</div>
<div class="abs txt" style="left:689px;width:76px;top:619px;text-align:center">Φ18~Φ20</div>
<div class="abs txt" style="left:765px;width:76px;top:619px;text-align:center">个</div>
<div class="abs txt" style="left:841px;width:84px;top:619px;text-align:right">1.00</div>
<div class="abs txt" style="left:930px;width:84px;top:619px;text-align:right">222.00</div>
<div class="abs txt" style="left:1019px;width:84px;top:619px;text-align:right">222.00</div>
<div class="doth" style="left:230px;top:674px;width:878px"></div>
<div class="abs txt" style="left:230px;width:32px;top:649px;text-align:center">13</div>
<div class="abs txt" style="left:418px;top:650px">010101050302</div>
<div class="abs txt" style="left:544px;top:650px">变径套筒</div>
<div class="abs txt" style="left:689px;width:76px;top:650px;text-align:center">Φ20~Φ22</div>
<div class="abs txt" style="left:765px;width:76px;top:650px;text-align:center">个</div>
<div class="abs txt" style="left:841px;width:84px;top:650px;text-align:right">1.00</div>
<div class="abs txt" style="left:930px;width:84px;top:650px;text-align:right">111.00</div>
<div class="abs txt" style="left:1019px;width:84px;top:650px;text-align:right">111.00</div>
<div class="doth" style="left:230px;top:705px;width:878px"></div>
<div class="abs txt" style="left:230px;width:32px;top:680px;text-align:center">14</div>
<div class="abs txt" style="left:418px;top:681px">010101050303</div>
<div class="abs txt" style="left:544px;top:681px">变径套筒</div>
<div class="abs txt" style="left:689px;width:76px;top:681px;text-align:center">Φ22~Φ25</div>
<div class="abs txt" style="left:765px;width:76px;top:681px;text-align:center">个</div>
<div class="abs txt" style="left:841px;width:84px;top:681px;text-align:right">1.00</div>
<div class="abs txt" style="left:930px;width:84px;top:681px;text-align:right">123.00</div>
<div class="abs txt" style="left:1019px;width:84px;top:681px;text-align:right">123.00</div>
<div class="doth" style="left:230px;top:736px;width:878px"></div>
<div class="abs txt" style="left:230px;width:32px;top:711px;text-align:center">15</div>
<div class="abs txt" style="left:418px;top:712px">0101020101</div>
<div class="abs txt" style="left:544px;top:712px">普通扁钢</div>
<div class="abs txt" style="left:689px;width:76px;top:712px;text-align:center">3*30</div>
<div class="abs txt" style="left:765px;width:76px;top:712px;text-align:center">根</div>
<div class="abs txt" style="left:841px;width:84px;top:712px;text-align:right">1.00</div>
<div class="abs txt" style="left:930px;width:84px;top:712px;text-align:right">0.00</div>
<div class="abs txt" style="left:1019px;width:84px;top:712px;text-align:right">0.00</div>
<div class="doth" style="left:230px;top:767px;width:878px"></div>
<div class="abs txt" style="left:230px;width:32px;top:742px;text-align:center">16</div>
<div class="abs txt" style="left:418px;top:743px">0101020102</div>
<div class="abs txt" style="left:544px;top:743px">普通扁钢</div>
<div class="abs txt" style="left:689px;width:76px;top:743px;text-align:center">3*40</div>
<div class="abs txt" style="left:765px;width:76px;top:743px;text-align:center">根</div>
<div class="abs txt" style="left:841px;width:84px;top:743px;text-align:right">1.00</div>
<div class="abs txt" style="left:930px;width:84px;top:743px;text-align:right">0.00</div>
<div class="abs txt" style="left:1019px;width:84px;top:743px;text-align:right">0.00</div>
<div class="doth" style="left:230px;top:798px;width:878px"></div>
<div class="abs txt" style="left:230px;width:32px;top:773px;text-align:center">17</div>
<div class="abs txt" style="left:418px;top:774px">0101020201</div>
<div class="abs txt" style="left:544px;top:774px">镀锌扁钢</div>
<div class="abs txt" style="left:689px;width:76px;top:774px;text-align:center">4*25</div>
<div class="abs txt" style="left:765px;width:76px;top:774px;text-align:center">根</div>
<div class="abs txt" style="left:841px;width:84px;top:774px;text-align:right">2.00</div>
<div class="abs txt" style="left:930px;width:84px;top:774px;text-align:right">0.00</div>
<div class="abs txt" style="left:1019px;width:84px;top:774px;text-align:right">0.00</div>
<div class="doth" style="left:230px;top:829px;width:878px"></div>
<div class="abs txt" style="left:230px;width:32px;top:804px;text-align:center">18</div>
<div class="abs txt" style="left:418px;top:805px">0101020202</div>
<div class="abs txt" style="left:544px;top:805px">镀锌扁钢</div>
<div class="abs txt" style="left:689px;width:76px;top:805px;text-align:center">4*30</div>
<div class="abs txt" style="left:765px;width:76px;top:805px;text-align:center">根</div>
<div class="abs txt" style="left:841px;width:84px;top:805px;text-align:right">1.00</div>
<div class="abs txt" style="left:930px;width:84px;top:805px;text-align:right">0.00</div>
<div class="abs txt" style="left:1019px;width:84px;top:805px;text-align:right">0.00</div>
<div class="doth" style="left:230px;top:860px;width:878px"></div>
<div class="abs txt" style="left:230px;width:32px;top:835px;text-align:center">19</div>
<div class="abs txt" style="left:418px;top:836px">0107050201</div>
<div class="abs txt" style="left:544px;top:836px">插销</div>
<div class="abs txt" style="left:689px;width:76px;top:836px;text-align:center">100</div>
<div class="abs txt" style="left:765px;width:76px;top:836px;text-align:center">只</div>
<div class="abs txt" style="left:841px;width:84px;top:836px;text-align:right">0.00</div>
<div class="abs txt" style="left:930px;width:84px;top:836px;text-align:right">0.00</div>
<div class="abs txt" style="left:1019px;width:84px;top:836px;text-align:right">0.00</div>
<div class="abs" style="left:1894px;top:272px;width:21px;height:594px;background:#F1F1F1"></div>
<div class="abs" style="left:1896px;top:293px;width:17px;height:293px;background:#C1C1C1"></div>
<div class="abs" style="left:1900px;top:281px;width:0;height:0;border-left:4.5px solid transparent;border-right:4.5px solid transparent;border-bottom:5px solid #A3A3A3"></div>
<div class="abs" style="left:1900px;top:851px;width:0;height:0;border-left:4.5px solid transparent;border-right:4.5px solid transparent;border-top:5px solid #505050"></div>
<div class="abs" style="left:230px;top:866px;width:1685px;height:37px;background:#F4F4F4;border-top:1px solid #DDD"></div>
<div class="abs" style="left:237px;top:873px;width:54px;height:26px;border:1px solid #A0B6D8;background:#fff"></div>
<div class="abs txt" style="left:246px;top:877px">20</div>
<div class="abs" style="left:275px;top:883px;width:0;height:0;border-left:3.5px solid transparent;border-right:3.5px solid transparent;border-top:6px solid #000"></div>
<div class="abs" style="left:300px;top:871px;width:1px;height:30px;background:#ccc;border-right:1px solid #fff"></div>
<div class="abs" style="left:375px;top:871px;width:1px;height:30px;background:#ccc;border-right:1px solid #fff"></div>
<div class="abs" style="left:495px;top:871px;width:1px;height:30px;background:#ccc;border-right:1px solid #fff"></div>
<div class="abs" style="left:570px;top:871px;width:1px;height:30px;background:#ccc;border-right:1px solid #fff"></div>
<svg class="abs" style="left:316px;top:878px" width="11" height="13" viewBox="0 0 11 13"><rect x="0" y="0" width="3" height="13" fill="#7DBDEB"/><path d="M11 0 L4 6.5 L11 13 Z" fill="#7DBDEB"/></svg>
<svg class="abs" style="left:352px;top:878px" width="8" height="13" viewBox="0 0 8 13"><path d="M8 0 L0 6.5 L8 13 Z" fill="#7DBDEB"/></svg>
<div class="abs txt" style="left:386px;top:877px">第</div>
<div class="abs" style="left:404px;top:872px;width:41px;height:27px;border:1px solid #A0B6D8;background:#fff"></div>
<div class="abs txt" style="left:409px;top:877px">1</div>
<div class="abs txt" style="left:448px;top:877px">共1页</div>
<svg class="abs" style="left:512px;top:878px" width="8" height="13" viewBox="0 0 8 13"><path d="M0 0 L8 6.5 L0 13 Z" fill="#7DBDEB"/></svg>
<svg class="abs" style="left:546px;top:878px" width="11" height="13" viewBox="0 0 11 13"><path d="M0 0 L7 6.5 L0 13 Z" fill="#7DBDEB"/><rect x="8" y="0" width="3" height="13" fill="#7DBDEB"/></svg>
<svg class="abs" style="left:584px;top:876px" width="14" height="16" viewBox="0 0 14 16"><path d="M9.5 4.2 A5 5 0 1 1 4 4.5" fill="none" stroke="#3A8AD0" stroke-width="2.4"/><path d="M4.5 0.5 L9.5 3.5 L4.5 7.5 Z" fill="#3A8AD0"/></svg>
<div class="abs txt" style="left:1700px;width:1207px;top:877px;text-align:right;left:auto;right:13px">显示0到0,共0记录</div>
<div class="abs" style="left:0;top:918px;width:1920px;height:30px;background:#D3E0F2;border-top:1px solid #A4BCDC"></div>
<div class="abs txt" style="left:0;width:1920px;top:924px;text-align:center;font-weight:bold;color:#1E3F7A">Copyright © All Rights Reserved</div>
</body></html>
